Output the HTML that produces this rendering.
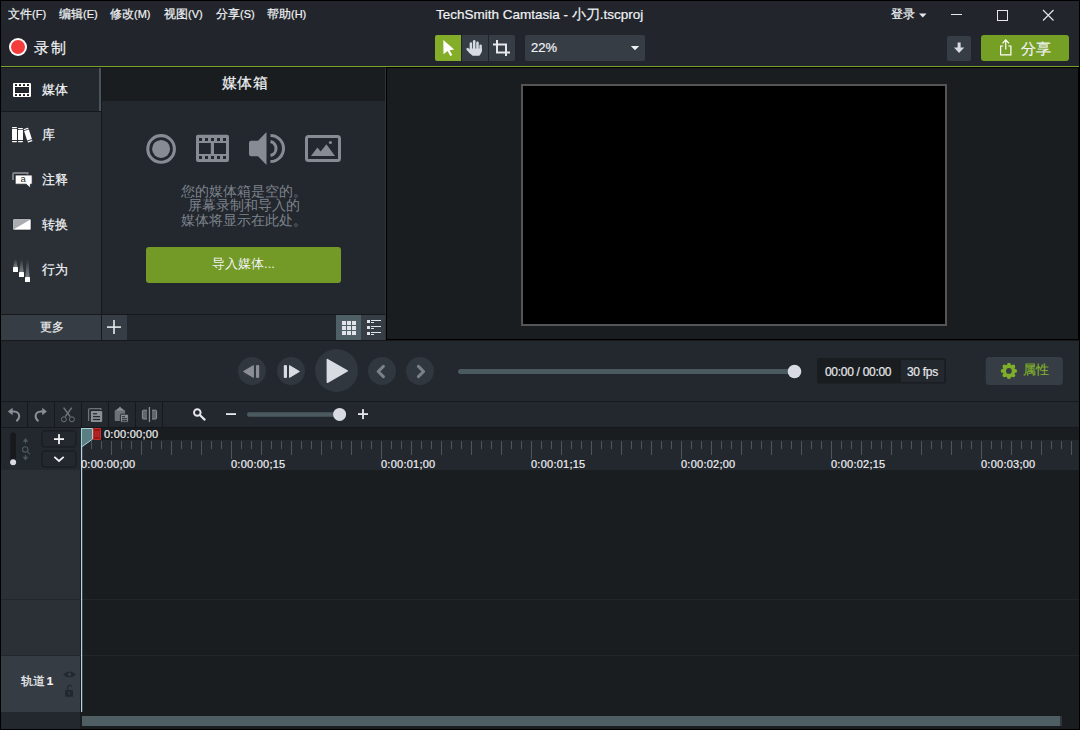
<!DOCTYPE html>
<html><head><meta charset="utf-8">
<style>
*{box-sizing:border-box;margin:0;padding:0}
html,body{width:1080px;height:730px;overflow:hidden;background:#000}
body{position:relative;font-family:"Liberation Sans",sans-serif;color:#f0f2f4}
.a{position:absolute}
.t{position:absolute;white-space:nowrap;line-height:1;-webkit-text-stroke:0.2px currentColor}
</style></head><body>
<!-- window frame -->
<div class="a" style="left:1px;top:1px;width:1078px;height:728px;background:#22262c"></div>

<!-- ===== title / menu bar ===== -->
<div id="menubar">
<div class="t" style="left:8px;top:8px;font-size:12px">文件<span style="font-size:11px">(F)</span></div>
<div class="t" style="left:59px;top:8px;font-size:12px">编辑<span style="font-size:11px">(E)</span></div>
<div class="t" style="left:110px;top:8px;font-size:12px">修改<span style="font-size:11px">(M)</span></div>
<div class="t" style="left:164px;top:8px;font-size:12px">视图<span style="font-size:11px">(V)</span></div>
<div class="t" style="left:216px;top:8px;font-size:12px">分享<span style="font-size:11px">(S)</span></div>
<div class="t" style="left:267px;top:8px;font-size:12px">帮助<span style="font-size:11px">(H)</span></div>
<div class="t" style="left:436px;top:8px;font-size:13.5px;letter-spacing:0px">TechSmith Camtasia - 小刀.tscproj</div>
<div class="t" style="left:891px;top:8px;font-size:12px">登录</div>
</div>

<!-- ===== toolbar ===== -->
<div id="toolbar">
<div class="a" style="left:9px;top:38px;width:18px;height:18px;border-radius:50%;background:#fff"></div>
<div class="a" style="left:11px;top:40px;width:14px;height:14px;border-radius:50%;background:#f43c3c"></div>
<div class="t" style="left:34px;top:40px;font-size:15px;letter-spacing:1.5px">录制</div>
<div class="a" style="left:435px;top:35px;width:26px;height:26px;background:#84ae2a;border-radius:2px 0 0 2px"></div>
<div class="a" style="left:462px;top:35px;width:26px;height:26px;background:#363d44"></div>
<div class="a" style="left:489px;top:35px;width:26px;height:26px;background:#363d44;border-radius:0 2px 2px 0"></div>
<div class="a" style="left:525px;top:35px;width:120px;height:26px;background:#363d44;border-radius:2px"></div>
<div class="t" style="left:531px;top:41px;font-size:13px">22%</div>
<div class="a" style="left:947px;top:35.5px;width:24px;height:25px;background:#363d44;border-radius:2px"></div>
<div class="a" style="left:981px;top:35px;width:88px;height:26px;background:#769f26;border-radius:3px"></div>
<div class="t" style="left:1021px;top:40.5px;font-size:15px">分享</div>
</div>
<div class="a" style="left:1px;top:66px;width:1078px;height:1px;background:#7aa22c"></div>

<!-- ===== left sidebar ===== -->
<div class="a" style="left:1px;top:67px;width:1078px;height:1px;background:#16181b"></div>
<div class="a" style="left:1px;top:68px;width:100px;height:247px;background:#2b3037"></div>
<div class="a" style="left:1px;top:68px;width:100px;height:43px;background:#23272e"></div>
<div class="a" style="left:1px;top:111px;width:100px;height:1px;background:#16181b"></div>
<div class="a" style="left:99px;top:68px;width:2px;height:43px;background:#4a5459"></div>
<div class="a" style="left:101px;top:68px;width:1px;height:272px;background:#16181b"></div>

<!-- media bin -->
<div class="a" style="left:102px;top:68px;width:283px;height:247px;background:#23272e"></div>
<div class="a" style="left:102px;top:68px;width:283px;height:33px;background:#1a1d20"></div>
<div class="t" style="left:221.5px;top:76px;font-size:14.5px;letter-spacing:0.6px">媒体箱</div>

<!-- bottom bar of left -->
<div class="a" style="left:1px;top:314px;width:385px;height:1px;background:#16181b"></div>
<div class="a" style="left:1px;top:315px;width:100px;height:25px;background:#363d44"></div>
<div class="a" style="left:102px;top:315px;width:283px;height:25px;background:#23272e"></div>
<div class="a" style="left:102px;top:315px;width:25px;height:25px;background:#363d44"></div>
<div class="a" style="left:336px;top:315px;width:25px;height:25px;background:#4e6066"></div>
<div class="a" style="left:361px;top:315px;width:24px;height:25px;background:#363d44"></div>

<!-- canvas area -->
<div class="a" style="left:385px;top:68px;width:1px;height:272px;background:#2f3438"></div>
<div class="a" style="left:386px;top:67px;width:1px;height:273px;background:#000"></div>
<div class="a" style="left:386px;top:67px;width:693px;height:273px;background:#000"></div>
<div class="a" style="left:387px;top:68px;width:691px;height:271px;background:#1a1d20"></div>
<div class="a" style="left:521px;top:84px;width:426px;height:242px;background:#000;border:2px solid #555"></div>

<!-- playback bar -->

<div class="a" style="left:1px;top:340px;width:1078px;height:1px;background:#16181b"></div>
<div class="a" style="left:1px;top:341px;width:1078px;height:60px;background:#23272e"></div>

<!-- timeline toolbar -->
<div class="a" style="left:1px;top:401px;width:1078px;height:1px;background:#16181b"></div>
<div class="a" style="left:1px;top:402px;width:1078px;height:25px;background:#23272e"></div>
<div class="a" style="left:1px;top:427px;width:1078px;height:1px;background:#16181b"></div>

<!-- ruler -->
<div class="a" style="left:1px;top:428px;width:80px;height:42px;background:#23272e"></div>
<div class="a" style="left:81px;top:428px;width:998px;height:12px;background:#1a1d20"></div>
<div class="a" style="left:81px;top:440px;width:998px;height:30px;background:#23272e"></div>

<!-- tracks -->
<div class="a" style="left:1px;top:470px;width:79px;height:242px;background:#2b3037"></div>
<div class="a" style="left:1px;top:656px;width:79px;height:56px;background:#363c43"></div>
<div class="a" style="left:1px;top:712px;width:79px;height:17px;background:#23272e"></div>
<div class="a" style="left:80px;top:470px;width:999px;height:259px;background:#1a1d20"></div>
<div class="a" style="left:1px;top:599px;width:1078px;height:1px;background:#23272b"></div>
<div class="a" style="left:1px;top:655px;width:1078px;height:1px;background:#23272b"></div>
<div class="a" style="left:82px;top:716px;width:980px;height:10px;background:#2f353b"></div><div class="a" style="left:82px;top:716px;width:978px;height:10px;background:#4e5e62"></div>
<div class="a" style="left:81px;top:428px;width:1px;height:284px;background:#a9cbe0"></div>



<!-- ===== ICONS SVG LAYER ===== -->
<svg class="a" style="left:0;top:0" width="1080" height="730" viewBox="0 0 1080 730">
<defs>
<linearGradient id="trail" x1="0" y1="0" x2="0" y2="1"><stop offset="0" stop-color="#8a9096" stop-opacity="0"/><stop offset="1" stop-color="#8a9096" stop-opacity="0.8"/></linearGradient>
</defs>
<!-- title bar controls -->
<path d="M919 13.5 H926.5 L922.75 17.5 Z" fill="#e6e8eb"/>
<rect x="951" y="14" width="11" height="1" fill="#e6e8eb"/>
<rect x="997.5" y="10.5" width="10" height="10" fill="none" stroke="#e6e8eb" stroke-width="1"/>
<path d="M1043 10 L1053.5 20.5 M1053.5 10 L1043 20.5" stroke="#e6e8eb" stroke-width="1.1"/>
<!-- select cursor -->
<path d="M443.3 40 L454.2 49.6 L449.6 50.2 L452.3 55 L450.3 56 L447.6 51.1 L443.5 54.2 Z" fill="#fff"/>
<!-- hand -->
<g stroke="#d8dce2" stroke-width="2.5" stroke-linecap="round" fill="none">
<path d="M470.9 43.6 V49.5"/><path d="M474.2 41.2 V49.5"/><path d="M477.5 42.8 V49.5"/><path d="M480.6 45.8 V50.5"/>
<path d="M467.6 49.2 L470.6 52.4"/>
</g>
<path d="M469.7 48.5 H481.9 V51 Q481.6 53.6 479.4 55.8 H472.6 Q471 54.6 469.2 52.2 Z" fill="#d8dce2"/>
<!-- crop -->
<path d="M497 40 V52.5 H510 M493 44.5 H506 V56" fill="none" stroke="#e6e8eb" stroke-width="2"/>
<!-- zoom caret -->
<path d="M630.8 45.9 H639.2 L635 50.2 Z" fill="#eef0f2"/>
<!-- download -->
<rect x="957.6" y="42.5" width="3" height="6" fill="#d8dce2"/>
<path d="M954 47.5 H964.2 L959.1 53 Z" fill="#d8dce2"/>
<!-- share -->
<path d="M1003.2 46 H1000.6 V54.8 H1010.9 V46 H1008.3" fill="none" stroke="#fff" stroke-width="1.2"/>
<path d="M1005.75 49.5 V40.2 M1002.5 43.4 L1005.75 39.8 L1009 43.4" fill="none" stroke="#fff" stroke-width="1.2"/>

<!-- sidebar: media film -->
<rect x="13" y="83" width="18" height="14" rx="1" fill="#fff"/>
<rect x="15.4" y="87.4" width="13.2" height="5.2" fill="#23272e" stroke="#0b0c0e" stroke-width="0.8"/>
<g fill="#0b0c0e">
<rect x="15" y="84" width="2" height="2" rx="0.4"/><rect x="19" y="84" width="2" height="2" rx="0.4"/><rect x="23" y="84" width="2" height="2" rx="0.4"/><rect x="27" y="84" width="2" height="2" rx="0.4"/>
<rect x="15" y="94" width="2" height="2" rx="0.4"/><rect x="19" y="94" width="2" height="2" rx="0.4"/><rect x="23" y="94" width="2" height="2" rx="0.4"/><rect x="27" y="94" width="2" height="2" rx="0.4"/>
</g>
<!-- library -->
<g fill="#fff">
<rect x="12" y="129" width="5" height="11"/><rect x="12" y="127" width="5" height="1.2" rx="0.6"/><rect x="12" y="141" width="5" height="1.2" rx="0.6"/>
<rect x="18" y="130" width="5" height="10"/><rect x="18" y="128" width="5" height="1.2" rx="0.6"/><rect x="18" y="141" width="5" height="1.2" rx="0.6"/>
<g transform="rotate(-18 28 135)"><rect x="25.5" y="130" width="5" height="10"/><rect x="25.5" y="128" width="5" height="1.2" rx="0.6"/><rect x="25.5" y="141" width="5" height="1.2" rx="0.6"/></g>
</g>
<!-- annotations -->
<path d="M13 180 V174.2 Q13 173 14.2 173 H27.6 V175" fill="none" stroke="#7d8187" stroke-width="1.9"/>
<path d="M16 175 H31.4 Q32.2 175 32.2 175.8 V183.4 Q32.2 184.2 31.4 184.2 H30.4 V188 L26.2 184.2 H16 Q15.2 184.2 15.2 183.4 V175.8 Q15.2 175 16 175 Z" fill="#fff" stroke="#1c1f23" stroke-width="0.8"/>
<text x="23.2" y="182" font-family="Liberation Sans" font-size="9.5" text-anchor="middle" fill="#1c1f23">a</text>
<!-- transitions -->
<rect x="13" y="219" width="18" height="11" rx="1" fill="#fff" stroke="#1c1f23" stroke-width="0.6"/>
<path d="M13.5 229.5 V220 Q13.5 219.4 14.2 219.4 H30.5 Z" fill="#a9acb0"/>
<!-- behaviors -->
<path d="M14.6 259 L16.4 259 L17.6 267 H13.4 Z" fill="url(#trail)"/>
<path d="M20.6 259 L22.4 259 L23.6 272 H19.4 Z" fill="url(#trail)"/>
<path d="M26.6 259 L28.4 259 L29.6 277 H25.4 Z" fill="url(#trail)"/>
<rect x="13" y="267" width="5" height="5" rx="0.6" fill="#fff"/>
<rect x="19" y="272" width="5" height="5" rx="0.6" fill="#fff"/>
<rect x="25" y="277" width="5" height="5" rx="0.6" fill="#fff"/>

<!-- media bin icons -->
<circle cx="161.1" cy="148.9" r="13.3" fill="none" stroke="#878b93" stroke-width="3.1"/>
<circle cx="161.1" cy="148.9" r="9" fill="#878b93"/>
<rect x="196" y="134.7" width="33" height="27.3" rx="2" fill="#878b93"/>
<g fill="#23272e">
<rect x="199" y="138" width="3" height="3"/><rect x="205" y="138" width="3" height="3"/><rect x="211" y="138" width="3" height="3"/><rect x="217" y="138" width="3" height="3"/><rect x="223" y="138" width="3" height="3"/>
<rect x="199" y="156" width="3" height="3"/><rect x="205" y="156" width="3" height="3"/><rect x="211" y="156" width="3" height="3"/><rect x="217" y="156" width="3" height="3"/><rect x="223" y="156" width="3" height="3"/>
<rect x="199" y="143" width="11.8" height="11"/><rect x="214" y="143" width="12" height="11"/>
</g>
<path d="M251 140.8 H258 L266.5 132 V165 L258 156.2 H251 Q249 156.2 249 154 V143 Q249 140.8 251 140.8 Z" fill="#878b93"/>
<path d="M270.5 141.5 A7.2 7.2 0 0 1 270.5 155.5" fill="none" stroke="#878b93" stroke-width="3"/>
<path d="M270.5 135.5 A13 13 0 0 1 270.5 161.5" fill="none" stroke="#878b93" stroke-width="3"/>
<rect x="306.5" y="136.4" width="33" height="24" rx="2" fill="none" stroke="#878b93" stroke-width="3"/>
<path d="M311 156 L317.4 147.4 L320.7 151.6 L326.4 144.2 L335 156 Z" fill="#878b93"/>
<circle cx="330.4" cy="142.5" r="1.6" fill="#878b93"/>

<!-- import button -->
<rect x="146" y="247" width="195" height="36" rx="3" fill="#739a26"/>

<!-- bottom bar plus -->
<rect x="107" y="326.3" width="14" height="1.6" fill="#e6e8eb"/>
<rect x="113.2" y="320" width="1.6" height="14" fill="#e6e8eb"/>
<!-- grid icon -->
<g fill="#e0e3e7">
<rect x="342" y="321" width="4" height="4"/><rect x="347" y="321" width="4" height="4"/><rect x="352" y="321" width="4" height="4"/>
<rect x="342" y="326" width="4" height="4"/><rect x="347" y="326" width="4" height="4"/><rect x="352" y="326" width="4" height="4"/>
<rect x="342" y="331" width="4" height="4"/><rect x="347" y="331" width="4" height="4"/><rect x="352" y="331" width="4" height="4"/>
</g>
<!-- list icon -->
<g fill="#e0e3e7">
<rect x="367" y="320" width="3" height="3"/><rect x="371" y="320" width="10" height="1"/><rect x="371" y="322" width="3" height="1"/>
<rect x="367" y="326" width="3" height="3"/><rect x="371" y="326" width="10" height="1"/><rect x="371" y="328" width="3" height="1"/>
<rect x="367" y="332" width="3" height="3"/><rect x="371" y="332" width="10" height="1"/><rect x="371" y="334" width="3" height="1"/>
</g>


<!-- ===== ruler ===== -->
<g fill="#4a565a"><rect x="91" y="441" width="1" height="8"/><rect x="101" y="441" width="1" height="8"/><rect x="111" y="441" width="1" height="14"/><rect x="121" y="441" width="1" height="8"/><rect x="131" y="441" width="1" height="8"/><rect x="141" y="441" width="1" height="14"/><rect x="151" y="441" width="1" height="8"/><rect x="161" y="441" width="1" height="8"/><rect x="171" y="441" width="1" height="14"/><rect x="181" y="441" width="1" height="8"/><rect x="191" y="441" width="1" height="8"/><rect x="201" y="441" width="1" height="14"/><rect x="211" y="441" width="1" height="8"/><rect x="221" y="441" width="1" height="8"/><rect x="231" y="441" width="1" height="18"/><rect x="241" y="441" width="1" height="8"/><rect x="251" y="441" width="1" height="8"/><rect x="261" y="441" width="1" height="14"/><rect x="271" y="441" width="1" height="8"/><rect x="281" y="441" width="1" height="8"/><rect x="291" y="441" width="1" height="14"/><rect x="301" y="441" width="1" height="8"/><rect x="311" y="441" width="1" height="8"/><rect x="321" y="441" width="1" height="14"/><rect x="331" y="441" width="1" height="8"/><rect x="341" y="441" width="1" height="8"/><rect x="351" y="441" width="1" height="14"/><rect x="361" y="441" width="1" height="8"/><rect x="371" y="441" width="1" height="8"/><rect x="381" y="441" width="1" height="18"/><rect x="391" y="441" width="1" height="8"/><rect x="401" y="441" width="1" height="8"/><rect x="411" y="441" width="1" height="14"/><rect x="421" y="441" width="1" height="8"/><rect x="431" y="441" width="1" height="8"/><rect x="441" y="441" width="1" height="14"/><rect x="451" y="441" width="1" height="8"/><rect x="461" y="441" width="1" height="8"/><rect x="471" y="441" width="1" height="14"/><rect x="481" y="441" width="1" height="8"/><rect x="491" y="441" width="1" height="8"/><rect x="501" y="441" width="1" height="14"/><rect x="511" y="441" width="1" height="8"/><rect x="521" y="441" width="1" height="8"/><rect x="531" y="441" width="1" height="18"/><rect x="541" y="441" width="1" height="8"/><rect x="551" y="441" width="1" height="8"/><rect x="561" y="441" width="1" height="14"/><rect x="571" y="441" width="1" height="8"/><rect x="581" y="441" width="1" height="8"/><rect x="591" y="441" width="1" height="14"/><rect x="601" y="441" width="1" height="8"/><rect x="611" y="441" width="1" height="8"/><rect x="621" y="441" width="1" height="14"/><rect x="631" y="441" width="1" height="8"/><rect x="641" y="441" width="1" height="8"/><rect x="651" y="441" width="1" height="14"/><rect x="661" y="441" width="1" height="8"/><rect x="671" y="441" width="1" height="8"/><rect x="681" y="441" width="1" height="18"/><rect x="691" y="441" width="1" height="8"/><rect x="701" y="441" width="1" height="8"/><rect x="711" y="441" width="1" height="14"/><rect x="721" y="441" width="1" height="8"/><rect x="731" y="441" width="1" height="8"/><rect x="741" y="441" width="1" height="14"/><rect x="751" y="441" width="1" height="8"/><rect x="761" y="441" width="1" height="8"/><rect x="771" y="441" width="1" height="14"/><rect x="781" y="441" width="1" height="8"/><rect x="791" y="441" width="1" height="8"/><rect x="801" y="441" width="1" height="14"/><rect x="811" y="441" width="1" height="8"/><rect x="821" y="441" width="1" height="8"/><rect x="831" y="441" width="1" height="18"/><rect x="841" y="441" width="1" height="8"/><rect x="851" y="441" width="1" height="8"/><rect x="861" y="441" width="1" height="14"/><rect x="871" y="441" width="1" height="8"/><rect x="881" y="441" width="1" height="8"/><rect x="891" y="441" width="1" height="14"/><rect x="901" y="441" width="1" height="8"/><rect x="911" y="441" width="1" height="8"/><rect x="921" y="441" width="1" height="14"/><rect x="931" y="441" width="1" height="8"/><rect x="941" y="441" width="1" height="8"/><rect x="951" y="441" width="1" height="14"/><rect x="961" y="441" width="1" height="8"/><rect x="971" y="441" width="1" height="8"/><rect x="981" y="441" width="1" height="18"/><rect x="991" y="441" width="1" height="8"/><rect x="1001" y="441" width="1" height="8"/><rect x="1011" y="441" width="1" height="14"/><rect x="1021" y="441" width="1" height="8"/><rect x="1031" y="441" width="1" height="8"/><rect x="1041" y="441" width="1" height="14"/><rect x="1051" y="441" width="1" height="8"/><rect x="1061" y="441" width="1" height="8"/><rect x="1071" y="441" width="1" height="14"/></g>
<!-- playhead -->
<path d="M81.5 428.5 H92.5 V439.2 L81.5 447 Z" fill="#5a7f82" stroke="#a5d0d6" stroke-width="1"/>
<rect x="93" y="428" width="8" height="12" rx="0.8" fill="#9e1414"/>
<rect x="93.5" y="428.5" width="7" height="11" rx="0.6" fill="none" stroke="#c53030" stroke-width="1"/>
<g fill="#c43a3a"><rect x="94.8" y="431" width="0.8" height="6"/><rect x="96.6" y="431" width="0.8" height="6"/><rect x="98.4" y="431" width="0.8" height="6"/></g>
<!-- ===== playback controls ===== -->
<circle cx="252" cy="371" r="14" fill="#31373e"/>
<path d="M243.5 371.5 L253.4 365.6 V377.4 Z" fill="#8a8e94" stroke="#8a8e94" stroke-width="1" stroke-linejoin="round"/>
<rect x="256" y="365" width="3.2" height="13" rx="1.2" fill="#8a8e94"/>
<circle cx="291" cy="371" r="14" fill="#31373e"/>
<rect x="283.8" y="365" width="3.2" height="13" rx="1.2" fill="#d8dce2"/>
<path d="M289.5 365.6 L299.4 371.5 L289.5 377.4 Z" fill="#d8dce2" stroke="#d8dce2" stroke-width="1" stroke-linejoin="round"/>
<circle cx="336.5" cy="370.5" r="21.5" fill="#31373e"/>
<path d="M327.4 359.6 L347.2 370.9 L327.4 382.2 Z" fill="#d8dce2" stroke="#d8dce2" stroke-width="1.6" stroke-linejoin="round"/>
<circle cx="382" cy="371" r="14" fill="#31373e"/>
<path d="M383.4 366.4 L378.2 371.5 L383.4 376.6" fill="none" stroke="#7c8189" stroke-width="3" stroke-linecap="round" stroke-linejoin="round"/>
<circle cx="420" cy="371" r="14" fill="#31373e"/>
<path d="M418.4 366.4 L423.6 371.5 L418.4 376.6" fill="none" stroke="#7c8189" stroke-width="3" stroke-linecap="round" stroke-linejoin="round"/>
<rect x="458" y="369" width="338" height="5" rx="2.5" fill="#4a5a5e"/>
<circle cx="794.5" cy="371.5" r="6.8" fill="#d8dce2"/>
<!-- time box -->
<rect x="817" y="358" width="129" height="25.5" rx="2" fill="#1a1d20"/>
<rect x="901" y="360" width="43.2" height="22.2" rx="1" fill="#23272e"/>
<!-- properties -->
<rect x="985.7" y="357" width="77.2" height="28" rx="3.5" fill="#363d44"/>
<g fill="#7fae2a"><circle cx="1008.9" cy="370.9" r="6.4"/><circle cx="1008.90" cy="364.60" r="1.9"/><circle cx="1013.35" cy="366.45" r="1.9"/><circle cx="1015.20" cy="370.90" r="1.9"/><circle cx="1013.35" cy="375.35" r="1.9"/><circle cx="1008.90" cy="377.20" r="1.9"/><circle cx="1004.45" cy="375.35" r="1.9"/><circle cx="1002.60" cy="370.90" r="1.9"/><circle cx="1004.45" cy="366.45" r="1.9"/></g>
<circle cx="1008.9" cy="370.9" r="2.9" fill="#363d44"/>

<!-- ===== timeline toolbar ===== -->
<g fill="#16181b">
<rect x="27" y="402" width="1" height="25"/><rect x="54" y="402" width="1" height="25"/><rect x="81" y="402" width="1" height="25"/>
<rect x="108" y="402" width="1" height="25"/><rect x="135" y="402" width="1" height="25"/><rect x="162" y="402" width="1" height="25"/>
</g>
<!-- undo -->
<path d="M7.9 411.5 L12.6 407.8 V415.2 Z" fill="#8a8f96"/>
<path d="M11.5 411.5 H13.8 C17 411.5 19.2 413.5 19.2 416.3 C19.2 418.2 18.4 419.4 17 420.6" fill="none" stroke="#8a8f96" stroke-width="2.1" stroke-linecap="round"/>
<!-- redo -->
<path d="M46.9 411.5 L42.2 407.8 V415.2 Z" fill="#8a8f96"/>
<path d="M43.3 411.5 H41 C37.8 411.5 35.6 413.5 35.6 416.3 C35.6 418.2 36.4 419.4 37.8 420.6" fill="none" stroke="#8a8f96" stroke-width="2.1" stroke-linecap="round"/>
<!-- cut -->
<path d="M63.6 407.6 L70.2 416.6 M71.8 407.6 L65.2 416.6" stroke="#6e737a" stroke-width="1.6" fill="none"/>
<circle cx="63.9" cy="419.3" r="2.5" fill="none" stroke="#6e737a" stroke-width="1"/>
<circle cx="71.9" cy="419.3" r="2.5" fill="none" stroke="#6e737a" stroke-width="1"/>
<!-- copy -->
<path d="M88.6 421 V410 Q88.6 408.6 90 408.6 H100.8 V410" fill="none" stroke="#6d7278" stroke-width="1.3"/>
<rect x="90.9" y="411.1" width="11.3" height="10.9" rx="0.8" fill="#8a8f96"/>
<g fill="#23272e"><rect x="93" y="413.2" width="4" height="1.2"/><rect x="93" y="416" width="7" height="1.2"/><rect x="93" y="418.9" width="7" height="1.2"/></g>
<!-- paste -->
<rect x="114.7" y="410" width="10.4" height="11" rx="0.8" fill="#6d7278"/>
<path d="M116.6 410.6 H123.4 V409.2 L121.4 408.2 L120 406.6 L118.6 408.2 L116.6 409.2 Z" fill="#8a8f96"/>
<rect x="120.4" y="414.2" width="8" height="8" rx="0.8" fill="#8a8f96" stroke="#23272e" stroke-width="0.9"/>
<g fill="#23272e"><rect x="122" y="416.2" width="3" height="1"/><rect x="122" y="418.2" width="5" height="1"/><rect x="122" y="420.2" width="5" height="1"/></g>
<!-- split -->
<path d="M147 410.2 H143.4 Q142.4 410.2 142.4 411.2 V418 Q142.4 419 143.4 419 H147 Z" fill="#62676d"/><path d="M147 410.2 H143.4 Q142.4 410.2 142.4 411.2 V418 Q142.4 419 143.4 419 H147" fill="none" stroke="#8a8f96" stroke-width="1"/>
<path d="M152 410.2 H155.6 Q156.6 410.2 156.6 411.2 V418 Q156.6 419 155.6 419 H152 Z" fill="#62676d"/><path d="M152 410.2 H155.6 Q156.6 410.2 156.6 411.2 V418 Q156.6 419 155.6 419 H152" fill="none" stroke="#8a8f96" stroke-width="1"/>
<rect x="148.8" y="407" width="1.3" height="15" fill="#8a8f96"/>
<!-- zoom search -->
<circle cx="197.3" cy="412.5" r="3.3" fill="none" stroke="#e6e8eb" stroke-width="1.9"/>
<path d="M199.8 415 L204.6 419.6" stroke="#e6e8eb" stroke-width="2.2" stroke-linecap="round"/>
<rect x="226" y="413.2" width="10" height="1.8" fill="#e6e8eb"/>
<rect x="247" y="412.2" width="92" height="4.5" rx="2.25" fill="#4a5a5e"/>
<circle cx="339.6" cy="414.4" r="6.5" fill="#d8dce2"/>
<rect x="358" y="413.2" width="10" height="1.8" fill="#e6e8eb"/>
<rect x="362.1" y="409.1" width="1.8" height="10" fill="#e6e8eb"/>

<!-- ===== track header controls ===== -->
<rect x="10.3" y="432.6" width="5.7" height="32.6" rx="2.85" fill="#17191c"/>
<circle cx="13.1" cy="462.2" r="3" fill="#d8dce2"/>
<g fill="#4b5a5c" stroke="none">
<path d="M25.5 438 L28.3 441.8 H22.7 Z"/><rect x="25" y="441" width="1" height="2.5"/>
<path d="M25.5 460.5 L28.3 456.8 H22.7 Z"/><rect x="25" y="455" width="1" height="2.5"/>
</g>
<circle cx="25.2" cy="449.4" r="2.7" fill="none" stroke="#4b5a5c" stroke-width="1.1"/>
<path d="M27.2 451.4 L30 454.4" stroke="#4b5a5c" stroke-width="1.1"/>
<rect x="41.9" y="430.8" width="34" height="16.2" rx="2.5" fill="#23272e" stroke="#17191c" stroke-width="1"/>
<rect x="41.9" y="450.9" width="34" height="16.2" rx="2.5" fill="#23272e" stroke="#17191c" stroke-width="1"/>
<rect x="54" y="438.2" width="10" height="1.8" fill="#f0f2f4"/>
<rect x="58.1" y="434.1" width="1.8" height="10" fill="#f0f2f4"/>
<path d="M54.3 456.8 L59 461 L63.7 456.8" fill="none" stroke="#f0f2f4" stroke-width="1.8"/>

<rect x="81" y="446" width="1.2" height="266" fill="#b9d4e4"/>
<!-- eye / lock -->
<path d="M63.1 674.4 Q69.5 668.5 75.9 674.4 Q69.5 680.3 63.1 674.4 Z" fill="#23272e"/>
<circle cx="69.5" cy="674.4" r="1.8" fill="#363c43"/>
<path d="M67.7 690 V687.4 Q67.7 685.4 69.6 685.4 Q71.4 685.4 71.4 687" fill="none" stroke="#23272e" stroke-width="1.1"/>
<rect x="65.1" y="689.9" width="7.9" height="6.8" rx="0.5" fill="#23272e"/>
<rect x="68.5" y="692" width="1.5" height="2.4" fill="#363c43"/>
</svg>

<!-- ===== TEXT LAYER ===== -->
<div class="t" style="left:42px;top:83px;font-size:13px;color:#f2f4f6">媒体</div>
<div class="t" style="left:42px;top:128px;font-size:13px;color:#f2f4f6">库</div>
<div class="t" style="left:42px;top:173px;font-size:13px;color:#f2f4f6">注释</div>
<div class="t" style="left:42px;top:218px;font-size:13px;color:#f2f4f6">转换</div>
<div class="t" style="left:42px;top:263px;font-size:13px;color:#f2f4f6">行为</div>
<div class="t" style="left:39.5px;top:320.5px;font-size:12px;color:#eef0f2">更多</div>
<div class="a" style="left:102px;top:183.5px;width:283px;text-align:center;font-size:14px;line-height:14.6px;color:#7d838b">您的媒体箱是空的。<br>屏幕录制和导入的<br>媒体将显示在此处。</div>
<div class="a" style="left:146px;top:257px;width:195px;text-align:center;font-size:13px;line-height:14px;color:#f0f2f4">导入媒体...</div>
<div class="t" style="left:825px;top:366px;font-size:12px;letter-spacing:-0.3px;color:#e6e8eb">00:00 / 00:00</div>
<div class="t" style="left:907px;top:366px;font-size:12px;letter-spacing:-0.3px;color:#e6e8eb">30 fps</div>
<div class="t" style="left:1023px;top:363.5px;font-size:12.5px;color:#80b02c">属性</div>
<div class="t" style="left:104px;top:429px;font-size:11px;letter-spacing:0.25px;color:#eef0f2">0:00:00;00</div>
<div class="t" style="left:81px;top:459px;font-size:11px;letter-spacing:0.25px;color:#eef0f2">0:00:00;00</div>
<div class="t" style="left:231px;top:459px;font-size:11px;letter-spacing:0.25px;color:#eef0f2">0:00:00;15</div>
<div class="t" style="left:381px;top:459px;font-size:11px;letter-spacing:0.25px;color:#eef0f2">0:00:01;00</div>
<div class="t" style="left:531px;top:459px;font-size:11px;letter-spacing:0.25px;color:#eef0f2">0:00:01;15</div>
<div class="t" style="left:681px;top:459px;font-size:11px;letter-spacing:0.25px;color:#eef0f2">0:00:02;00</div>
<div class="t" style="left:831px;top:459px;font-size:11px;letter-spacing:0.25px;color:#eef0f2">0:00:02;15</div>
<div class="t" style="left:981px;top:459px;font-size:11px;letter-spacing:0.25px;color:#eef0f2">0:00:03;00</div>
<div class="t" style="left:21px;top:675px;font-size:12px;word-spacing:-1.5px;color:#f0f2f4">轨道 <b style="font-weight:bold;font-size:11.5px">1</b></div>

</body></html>
